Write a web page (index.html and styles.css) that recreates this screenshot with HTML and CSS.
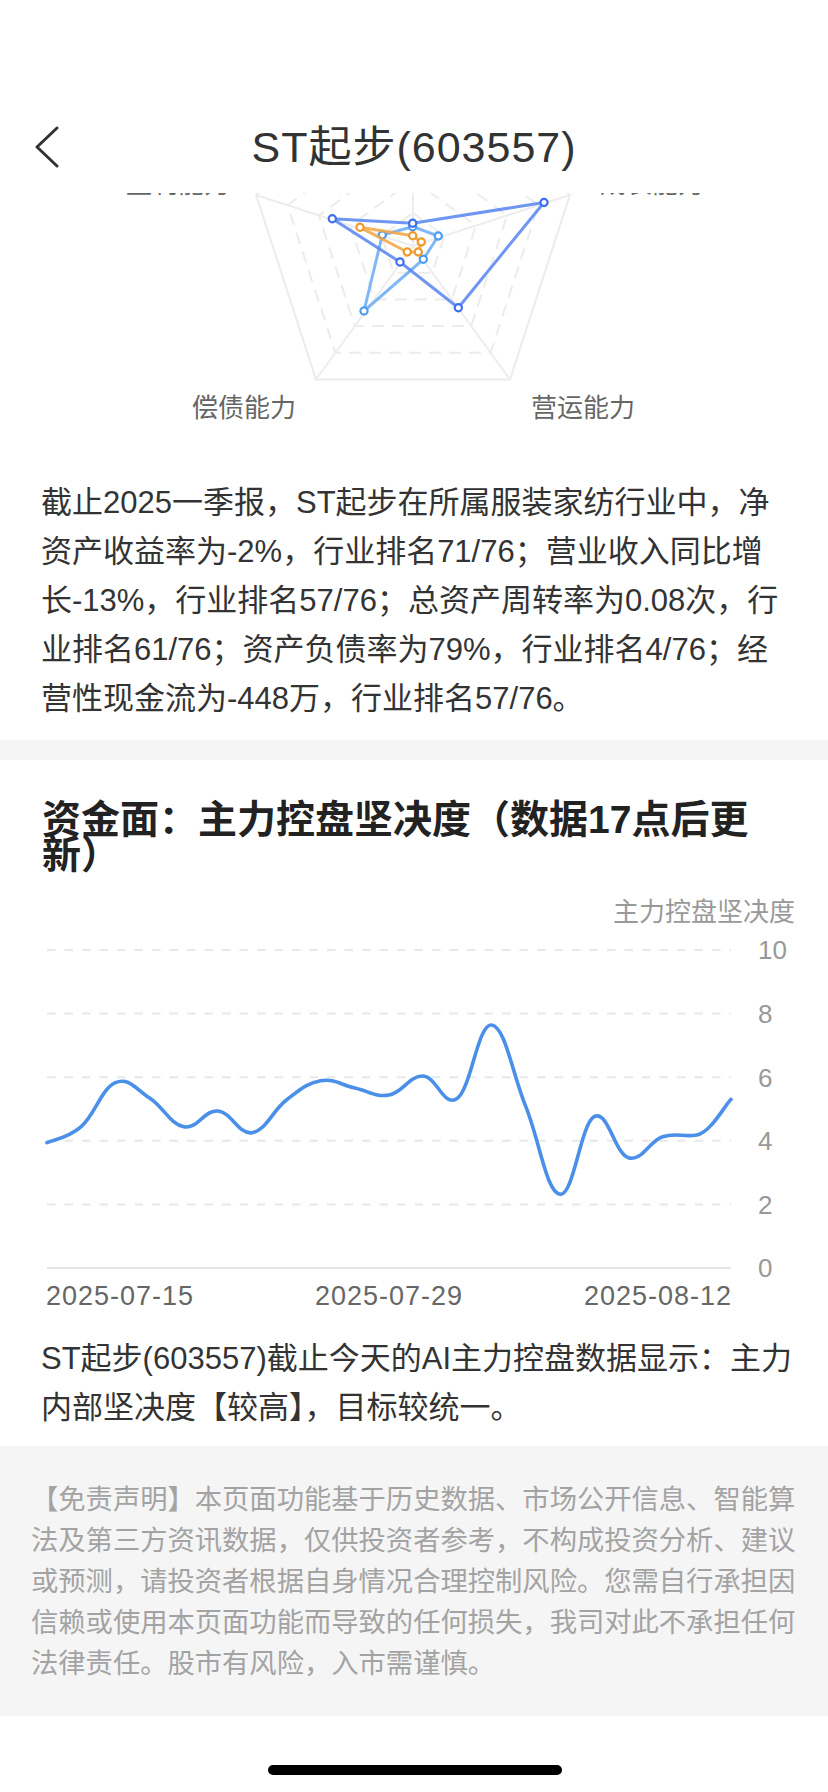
FILE: index.html
```html
<!DOCTYPE html>
<html lang="zh-CN">
<head>
<meta charset="utf-8">
<meta name="viewport" content="width=828">
<title>ST起步(603557)</title>
<link rel="stylesheet" href="styles.css">
</head>
<body>
<header class="nav">
  <div class="nav-bar">
    <svg class="nav-back" viewBox="0 0 24 42" width="24" height="42"><path d="M22 2 L2 21 L22 40"/></svg>
    <h1 class="nav-title">ST起步(603557)</h1>
    <span class="nav-spacer"></span>
  </div>
</header>

<main class="page">
  <section class="ability">
    <svg class="radar" viewBox="0 0 828 440" width="828" height="440">
      <g class="radar-spokes">
        <line x1="413" y1="246" x2="413" y2="81"/>
        <line x1="413" y1="246" x2="569.9" y2="195"/>
        <line x1="413" y1="246" x2="510" y2="379.5"/>
        <line x1="413" y1="246" x2="316" y2="379.5"/>
        <line x1="413" y1="246" x2="256.1" y2="195"/>
      </g>
      <g class="radar-rings">
        <polygon points="413,114 538.5,205.2 490.6,352.8 335.4,352.8 287.5,205.2"/>
        <polygon points="413,147 507.2,215.4 471.2,326.1 354.8,326.1 318.8,215.4"/>
        <polygon points="413,180 475.8,225.6 451.8,299.4 374.2,299.4 350.2,225.6"/>
        <polygon points="413,213 444.4,235.8 432.4,272.7 393.6,272.7 381.6,235.8"/>
      </g>
      <polygon class="radar-outer" points="413,81 569.9,195 510,379.5 316,379.5 256.1,195"/>

      <text class="radar-name" x="413" y="70" text-anchor="middle">现金流</text>
      <text class="radar-name" x="230" y="192.5" text-anchor="end">盈利能力</text>
      <text class="radar-name" x="600" y="192.5">成长能力</text>
      <text class="radar-name" x="296" y="417" text-anchor="end">偿债能力</text>
      <text class="radar-name" x="531" y="417">营运能力</text>

      <g class="series series-light">
        <polygon points="412.7,226.7 438.3,236 423.3,259.3 364,311 382.3,235"/>
        <circle cx="412.7" cy="226.7" r="3.6"/>
        <circle cx="438.3" cy="236" r="3.6"/>
        <circle cx="423.3" cy="259.3" r="3.6"/>
        <circle cx="364" cy="311" r="3.6"/>
        <circle cx="382.3" cy="235" r="3.6"/>
      </g>
      <g class="series series-orange">
        <polygon points="412.7,235.7 421.3,242 418.3,252 407.3,252 360,227.3"/>
        <circle cx="412.7" cy="235.7" r="3.6"/>
        <circle cx="421.3" cy="242" r="3.6"/>
        <circle cx="418.3" cy="252" r="3.6"/>
        <circle cx="407.3" cy="252" r="3.6"/>
        <circle cx="360" cy="227.3" r="3.6"/>
      </g>
      <g class="series series-dark">
        <polygon points="412.7,223.3 544,202.5 458.3,307.7 400,262 332.3,218.8"/>
        <circle cx="412.7" cy="223.3" r="3.6"/>
        <circle cx="544" cy="202.5" r="3.6"/>
        <circle cx="458.3" cy="307.7" r="3.6"/>
        <circle cx="400" cy="262" r="3.6"/>
        <circle cx="332.3" cy="218.8" r="3.6"/>
      </g>
    </svg>
    <p class="para para-ability">截止2025一季报，ST起步在所属服装家纺行业中，净资产收益率为-2%，行业排名71/76；营业收入同比增长-13%，行业排名57/76；总资产周转率为0.08次，行业排名61/76；资产负债率为79%，行业排名4/76；经营性现金流为-448万，行业排名57/76。</p>
  </section>

  <div class="divider"></div>

  <section class="fund">
    <h2 class="fund-title">资金面：主力控盘坚决度（数据17点后更新）</h2>
    <svg class="trend" viewBox="0 0 828 440" width="828" height="440">
      <text class="axis-name" x="795" y="41" text-anchor="end">主力控盘坚决度</text>
      <g class="trend-grid">
        <line x1="47" y1="70" x2="731" y2="70"/>
        <line x1="47" y1="133.6" x2="731" y2="133.6"/>
        <line x1="47" y1="197.2" x2="731" y2="197.2"/>
        <line x1="47" y1="260.8" x2="731" y2="260.8"/>
        <line x1="47" y1="324.4" x2="731" y2="324.4"/>
      </g>
      <line class="trend-base" x1="47" y1="388" x2="731" y2="388"/>
      <g class="y-labels">
        <text x="758" y="79.3">10</text>
        <text x="758" y="143">8</text>
        <text x="758" y="206.5">6</text>
        <text x="758" y="270">4</text>
        <text x="758" y="333.7">2</text>
        <text x="758" y="397.3">0</text>
      </g>
      <g class="x-labels">
        <text x="46" y="425">2025-07-15</text>
        <text x="389" y="425" text-anchor="middle">2025-07-29</text>
        <text x="732" y="425" text-anchor="end">2025-08-12</text>
      </g>
      <path class="trend-line" d="M47 262.7 C53.84 259.5 67.52 258.7 81.2 246.7 C94.88 234.7 101.72 208.44 115.4 202.7 C129.08 196.96 135.92 209.2 149.6 218 C163.28 226.8 170.12 244.1 183.8 246.7 C197.48 249.3 204.32 229.8 218 231 C231.68 232.2 238.52 254.9 252.2 252.7 C265.88 250.5 272.72 230.4 286.4 220 C300.08 209.6 306.92 203.1 320.6 200.7 C334.28 198.3 341.12 205.14 354.8 208 C368.48 210.86 375.32 217.4 389 215 C402.68 212.6 409.52 195.34 423.2 196 C436.88 196.66 443.72 228.5 457.4 218.3 C471.08 208.1 477.92 143.32 491.6 145 C505.28 146.68 512.12 192.84 525.8 226.7 C539.48 260.56 546.32 312.3 560 314.3 C573.68 316.3 580.52 244.02 594.2 236.7 C607.88 229.38 614.72 273.7 628.4 277.7 C642.08 281.7 648.92 261.24 662.6 256.7 C676.28 252.16 683.12 257.5 696.8 255 C710.48 252.5 724.16 226.44 731 219.3"/>
    </svg>
    <p class="para para-fund">ST起步(603557)截止今天的AI主力控盘数据显示：主力内部坚决度【较高】，目标较统一。</p>
  </section>

  <section class="disclaimer">
    <p>【免责声明】本页面功能基于历史数据、市场公开信息、智能算法及第三方资讯数据，仅供投资者参考，不构成投资分析、建议或预测，请投资者根据自身情况合理控制风险。您需自行承担因信赖或使用本页面功能而导致的任何损失，我司对此不承担任何法律责任。股市有风险，入市需谨慎。</p>
  </section>
</main>

<div class="home-indicator"></div>
</body>
</html>
```

FILE: styles.css
```css
* {
  box-sizing: border-box;
  margin: 0;
  padding: 0;
}

html,
body {
  background: #ffffff;
}

body {
  width: 828px;
  font-family: "Liberation Sans", "Noto Sans CJK SC", sans-serif;
  color: #333333;
}

/* ---------- navigation header (overlays scrolled content) ---------- */
.nav {
  position: fixed;
  top: 0;
  left: 0;
  width: 828px;
  height: 193px;
  padding-top: 117px;
  background: #ffffff;
  z-index: 10;
}

.nav-bar {
  height: 60px;
  display: grid;
  grid-template-columns: 1fr auto 1fr;
  align-items: center;
}

.nav-back {
  display: block;
  margin-left: 35px;
  fill: none;
  stroke: #333333;
  stroke-width: 3;
  stroke-linecap: round;
  stroke-linejoin: round;
}

.nav-title {
  font-size: 43px;
  font-weight: 400;
  line-height: 60px;
  letter-spacing: 1px;
  color: #333333;
  white-space: nowrap;
}

/* ---------- radar ---------- */
.radar,
.trend {
  display: block;
}

.radar-spokes line {
  stroke: #ededed;
  stroke-width: 2;
}

.radar-rings polygon {
  fill: none;
  stroke: #ececec;
  stroke-width: 2;
  stroke-dasharray: 12 8;
}

.radar-outer {
  fill: none;
  stroke: #ececec;
  stroke-width: 2;
}

.radar-name {
  font-family: "Noto Sans CJK SC", sans-serif;
  font-size: 26px;
  fill: #666666;
}

.series polygon {
  fill: none;
  stroke-width: 3;
  stroke-linejoin: round;
}

.series circle {
  fill: #ffffff;
  stroke-width: 2.2;
}

.series-dark polygon {
  stroke: #5684f0;
  opacity: 0.85;
}

.series-dark circle {
  stroke: #3c6ef0;
}

.series-light polygon {
  stroke: #6aaaf2;
  opacity: 0.85;
}

.series-light circle {
  stroke: #4d9cf0;
}

.series-orange polygon {
  stroke: #f0a640;
  opacity: 0.85;
}

.series-orange circle {
  stroke: #ee9a2a;
}

/* ---------- paragraphs ---------- */
.para {
  font-size: 31px;
  line-height: 49px;
  color: #333333;
}

.para-ability {
  padding: 38px 40px 17px 41px;
}

.divider {
  height: 20px;
  background: #f5f5f5;
}

/* ---------- fund section ---------- */
.fund {
  padding-top: 41.5px;
}

.fund-title {
  font-size: 39px;
  font-weight: 700;
  line-height: 35px;
  color: #222222;
  padding: 0 50px 0 42px;
}

.trend {
  margin-top: 8.5px;
}

.axis-name {
  font-family: "Noto Sans CJK SC", sans-serif;
  font-size: 26px;
  fill: #999999;
}

.trend-grid line {
  stroke: #e8e8e8;
  stroke-width: 2;
  stroke-dasharray: 8.5 9;
}

.trend-base {
  stroke: #e6e6e6;
  stroke-width: 2;
}

.y-labels text {
  font-size: 26px;
  fill: #999999;
}

.x-labels text {
  font-size: 27px;
  letter-spacing: 1px;
  fill: #666666;
}

.trend-line {
  fill: none;
  stroke: #4a8fe8;
  stroke-width: 3.6;
  stroke-linecap: round;
  stroke-linejoin: round;
}

.para-fund {
  padding: 13.5px 28px 0 41px;
}

/* ---------- disclaimer ---------- */
.disclaimer {
  margin-top: 14.5px;
  background: #f5f5f5;
  padding: 32.5px 31px;
}

.disclaimer p {
  font-size: 27.3px;
  line-height: 41px;
  color: #a3a3a3;
}

/* ---------- home indicator ---------- */
.home-indicator {
  position: fixed;
  left: 268px;
  bottom: 17px;
  width: 294px;
  height: 10px;
  border-radius: 5px;
  background: #000000;
}
```
